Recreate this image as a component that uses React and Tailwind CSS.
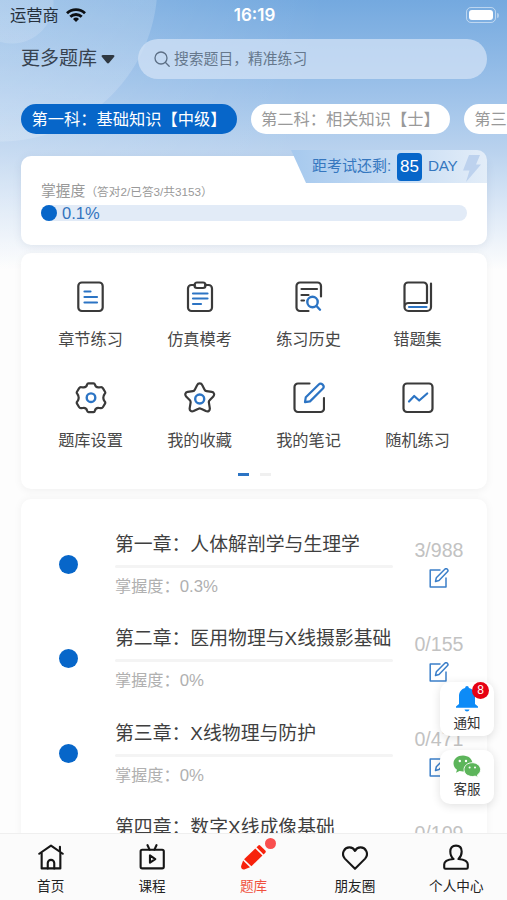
import { useState } from "react";

const subjects = ["第一科：基础知识【中级】", "第二科：相关知识【士】", "第三科：专业知识【师】"];

const chapters = [
    { title: "第一章：人体解剖学与生理学", mastery: "0.3%", count: "3/988" },
    { title: "第二章：医用物理与X线摄影基础", mastery: "0%", count: "0/155" },
    { title: "第三章：X线物理与防护", mastery: "0%", count: "0/471" },
    { title: "第四章：数字X线成像基础", mastery: "0%", count: "0/109" },
];

// Dark outline + blue accent icons, all on a 32px grid
function Icon({ children, className = "w-8 h-8" }) {
    return (
        <svg
            viewBox="0 0 32 32"
            className={className}
            fill="none"
            stroke="#3a3a3a"
            strokeWidth="2.2"
            strokeLinecap="round"
            strokeLinejoin="round"
        >
            {children}
        </svg>
    );
}

const menu = [
    {
        label: "章节练习",
        icon: (
            <>
                <rect x="3.3" y="1.5" width="24.4" height="28.5" rx="3.5" />
                <path d="M9.500 10.500h6M9.500 16h12.500M9.500 21.500h12.500" stroke="#2c74c4" />
            </>
        ),
    },
    {
        label: "仿真模考",
        icon: (
            <>
                <path d="M11 4H7.500A3.500 3.500 0 0 0 4 7.500v19A3.500 3.500 0 0 0 7.500 30h17a3.500 3.500 0 0 0 3.500-3.500v-19A3.500 3.500 0 0 0 24.500 4H21" />
                <rect x="10.500" y="1.500" width="11" height="5.500" rx="2.500" />
                <path d="M9 12.500h14.500M9 17.500h14.500M9 23h8" stroke="#2c74c4" />
            </>
        ),
    },
    {
        label: "练习历史",
        icon: (
            <>
                <path d="M15.500 30H7a3.500 3.500 0 0 1-3.500-3.500V5A3.500 3.500 0 0 1 7 1.500h17.500A3.500 3.500 0 0 1 28 5v10.500" />
                <path d="M8.500 8h15.500M8.500 14h7M8.500 19.500h2.500" />
                <g stroke="#2c74c4" strokeWidth="2.400">
                    <circle cx="19.500" cy="21" r="5.200" />
                    <path d="M23.500 25l3.500 3.700" />
                </g>
            </>
        ),
    },
    {
        label: "错题集",
        icon: (
            <>
                <path d="M2.500 26V5A3.500 3.500 0 0 1 6 1.500h15.500A3.500 3.500 0 0 1 25 5v17H6.500a4 4 0 0 0-4 4 4 4 0 0 0 4 4H25a4 4 0 0 0 4-4V2.500" />
                <path d="M7 26h17.500" stroke="#2c74c4" />
            </>
        ),
    },
    {
        label: "题库设置",
        icon: (
            <>
                <path d="M13.500 1.300H18.500Q19.600 1.300 19.900 2.600Q20.600 5.800 24 5.400L25.800 5.200Q27.200 5 28 6.400L30 9.800Q30.700 11 29.600 12Q27 15.700 29.600 19.400Q30.700 20.400 30 21.600L28 25Q27.200 26.400 25.800 26.200L24 26Q20.600 25.600 19.900 28.800Q19.600 30.100 18.500 30.100H13.500Q12.400 30.100 12.100 28.800Q11.400 25.600 8 26L6.200 26.200Q4.800 26.400 4 25L2 21.600Q1.300 20.400 2.400 19.400Q5 15.700 2.400 12Q1.300 11 2 9.800L4 6.400Q4.800 5 6.200 5.200L8 5.400Q11.400 5.800 12.100 2.600Q12.400 1.300 13.500 1.300Z" />
                <circle cx="16" cy="15.700" r="4.300" stroke="#2c74c4" strokeWidth="2.400" />
            </>
        ),
    },
    {
        label: "我的收藏",
        icon: (
            <>
                <path d="M13.200 3c1-2.300 4-2.300 5 0l2.400 4.700c.4.800 1.100 1.300 2 1.400l5.200.8c2.400.4 3 2.900 1.500 4.500l-3.700 3.900c-.6.600-.9 1.500-.7 2.300l.9 5.500c.3 2.700-1.700 4-3.900 3L17 26.700a2.700 2.700 0 0 0-2.500 0l-4.900 2.400c-2.200 1-4.300-.4-3.900-3l.9-5.500c.1-.9-.1-1.700-.7-2.300l-3.800-3.900c-1.500-1.600-.8-4.100 1.600-4.500l5.200-.8c.8-.1 1.500-.6 1.900-1.400z" />
                <circle cx="15.700" cy="17" r="4.500" stroke="#2c74c4" strokeWidth="2.400" />
            </>
        ),
    },
    {
        label: "我的笔记",
        icon: (
            <>
                <path d="M16.500 1.500H5A3.500 3.500 0 0 0 1.500 5v21.500A3.500 3.500 0 0 0 5 30h22.500a3.500 3.500 0 0 0 3.500-3.500V16" />
                <path d="M12 20.200l.8-5L25.500 2.700a2.900 2.900 0 0 1 4.200 4.100L17 19.400z" stroke="#2c74c4" />
            </>
        ),
    },
    {
        label: "随机练习",
        icon: (
            <>
                <rect x="1.500" y="1.500" width="29" height="28.500" rx="3.500" />
                <path d="M7 19.500l5.200-5.500 5 4.500 8-7" stroke="#2c74c4" />
            </>
        ),
    },
];

const tabs = [
    {
        label: "首页",
        icon: (
            <>
                <path d="M1.500 12L16 2l14.500 10M27 3.500V9M4.500 10.500V30h23V10.500" />
                <path d="M12 30v-6.500a4 4 0 0 1 8 0V30" />
            </>
        ),
    },
    {
        label: "课程",
        icon: (
            <>
                <rect x="2" y="7" width="28.500" height="23" rx="2" />
                <path d="M10.500 1.500L13 7M21.500 1.500L19 7M13.500 14v9l6.500-4.500z" />
            </>
        ),
    },
    {
        label: "题库",
        dot: true,
        icon: (
            <g fill="#f7220c" stroke="none">
                <path d="M18.800 5.500l8.800 8.800L14 27.500 5 18.700z" />
                <path d="M20.300 4l2-2a2 2 0 0 1 2.800 0l6 6a2 2 0 0 1 0 2.800l-2 2z" />
                <path d="M3.800 20.200l8.500 8.300-6.300 2.600c-3 1-5.300-1.200-4.500-4.200z" />
            </g>
        ),
    },
    {
        label: "朋友圈",
        icon: <path d="M16 30.500L3.500 18a8.700 8.700 0 0 1-1.300-9.500C5 3 13 2.500 16 8.500c3-6 11-5.500 13.800 0a8.700 8.700 0 0 1-1.300 9.500z" />,
    },
    {
        label: "个人中心",
        icon: (
            <path d="M16 2c4.800 0 7 3 7 7.200s-1.700 7.300-4 9.300c5 .5 11.500 2 11.500 6.500v4c0 1-.5 1.500-1.500 1.500H3c-1 0-1.500-.5-1.500-1.500v-4c0-4.500 6.500-6 11.500-6.500-2.300-2-4-5.100-4-9.300S11.200 2 16 2z" />
        ),
    },
];

function EditIcon() {
    return (
        <svg viewBox="0 0 20 20" className="w-5 h-5" fill="none" stroke="#3b7fc9" strokeWidth="1.500" strokeLinejoin="round">
            <path d="M11.500 2H1.200v17H17V9.500" />
            <path d="M6.500 13.500l.8-3.700L15.800 1.300a1.800 1.800 0 0 1 2.600 2.500L10 12.500z" />
        </svg>
    );
}

function StatusBar() {
    return (
        <div className="grid grid-cols-3 items-center h-[30px] pl-[10px] pr-2">
            <div className="flex items-center gap-[7px] text-[16.300px] text-[#25303c]">
                <span>运营商</span>
                <svg viewBox="0 0 20 14" className="w-5 h-3.5" fill="none" stroke="#0c0f13" strokeWidth="2.800">
                    <path d="M1 5.200a13 13 0 0 1 18 0" />
                    <path d="M4.300 8.800a8.200 8.200 0 0 1 11.400 0" />
                    <path d="M10 14l-3-3.100a4.300 4.300 0 0 1 6 0z" fill="#0c0f13" stroke="none" />
                </svg>
            </div>
            <div className="pt-px text-center text-[17px] font-semibold text-white font-[Inter,sans-serif]">16:19</div>
            <div className="flex items-center justify-end gap-px">
                <div className="w-[30px] h-4 rounded-[5px] border border-white/50 p-[2px]">
                    <div className="h-full rounded-[3px] bg-white"></div>
                </div>
                <div className="w-[2px] h-[5px] rounded-r bg-white/40"></div>
            </div>
        </div>
    );
}

export default function App() {
    const [subject, setSubject] = useState(0);
    const [activeTab, setActiveTab] = useState(2);

    return (
        <div className="h-[900px] w-full flex flex-col overflow-hidden bg-[#fdfdfd] font-['Liberation_Sans','Noto_Sans_CJK_SC',sans-serif]">
            <div className="relative flex-1 min-h-0 overflow-hidden bg-[radial-gradient(circle_at_12px_2px,rgba(255,255,255,0.14)_41px,transparent_42px),radial-gradient(circle_at_0px_-16px,rgba(255,255,255,0.17)_157px,transparent_158px),linear-gradient(100deg,rgba(255,255,255,0.2),transparent_50%),linear-gradient(to_bottom,#74a9df_0px,#9cc1e9_90px,#b9d2ee_150px,#dae7f6_205px,#fdfdfd_270px)]">
                <StatusBar />

                {/* Search */}
                <div className="flex items-center mt-[9px] pl-[21px] pr-5">
                    <button className="flex items-center gap-1 w-[117px] pt-px text-[19px] text-[#37424f] whitespace-nowrap">
                        更多题库
                        <svg viewBox="0 0 14 9" className="w-3.5 h-[9px]" fill="#2f3842">
                            <path d="M2 0h10c1.500 0 2 1 1 2L8.200 7.800c-.7.8-1.700.8-2.400 0L1 2C0 1 .5 0 2 0z" />
                        </svg>
                    </button>
                    <div className="flex-1 flex items-center gap-1 h-10 rounded-full bg-[#d2e2f5]/75 pl-4 text-[14.800px] text-[#66788d]">
                        <svg viewBox="0 0 16 16" className="w-4 h-4" fill="none" stroke="#5c6f85" strokeWidth="1.3" strokeLinecap="round">
                            <circle cx="7" cy="7" r="6" />
                            <path d="M11.500 11.500l3.700 3.700" />
                        </svg>
                        <span>搜索题目，精准练习</span>
                    </div>
                </div>

                {/* Subjects */}
                <div className="flex gap-[13.500px] mt-[25px] pl-[21px] overflow-x-auto [scrollbar-width:none]">
                    {subjects.map((s, i) => (
                        <button
                            key={s}
                            onClick={() => setSubject(i)}
                            className={`shrink-0 h-[30px] px-[10.500px] rounded-full text-[16.250px] leading-[30px] whitespace-nowrap ${
                                subject === i ? "bg-[#0766c9] text-white" : "bg-white text-[#999]"
                            }`}
                        >
                            {s}
                        </button>
                    ))}
                </div>

                <main className="pl-[21px] pr-5">
                    {/* Mastery */}
                    <section className="relative mt-[22px] h-[89px] rounded-[10px] bg-white pt-[23px] px-5 shadow-[0_2px_8px_rgba(60,80,120,0.10)]">
                        <div className="absolute right-0 -top-[6px] flex items-center w-[196px] h-[33px] pl-[21px] rounded-tr-[10px] bg-linear-to-r from-[#a6c9ee] to-[#e3edf8] [clip-path:polygon(0_0,100%_0,100%_100%,15px_100%)] text-[15px] text-[#3577bf] whitespace-nowrap">
                            <span className="w-[79px]">距考试还剩:</span>
                            <span className="ml-[6px] w-[25px] h-7 rounded-[4px] bg-[#0766c9] text-center text-[17px] leading-7 text-white">85</span>
                            <span className="ml-[6px] text-[15.300px] tracking-[-0.3px]">DAY</span>
                            <svg viewBox="0 0 18 27" className="ml-[6px] mt-1 w-[18px] h-[27px] shrink-0" fill="#bdd2ee">
                                <path d="M6 0h11l-4 9.500h5L3 27l3.500-11.500H0z" />
                            </svg>
                        </div>
                        <div className="flex items-center h-6 text-[14.800px] text-[#999]">
                            掌握度<span className="text-[11.700px] pt-px">（答对2/已答3/共3153）</span>
                        </div>
                        <div className="mt-[2px] flex items-center h-4 rounded-full bg-[#e2ebf7]">
                            <div className="w-4 h-4 rounded-full bg-[#0766c9]"></div>
                            <span className="ml-[5px] text-[16.500px] text-[#3173bd]">0.1%</span>
                        </div>
                    </section>

                    {/* Menu */}
                    <section className="mt-2 h-[236px] rounded-[10px] bg-white pt-7 px-[15px] shadow-[0_2px_8px_rgba(0,0,0,0.05)]">
                        <div className="grid grid-cols-4 gap-y-[17px]">
                            {menu.map((m) => (
                                <button key={m.label} className="flex flex-col items-center h-[84px]">
                                    <Icon>{m.icon}</Icon>
                                    <span className="mt-[14px] text-[16.200px] leading-6 text-[#484848]">{m.label}</span>
                                </button>
                            ))}
                        </div>
                        <div className="flex justify-center gap-[11px] mt-[7px]">
                            <div className="w-[11px] h-[3px] bg-[#2c74c4]"></div>
                            <div className="w-[11px] h-[3px] bg-[#f0f0f0]"></div>
                        </div>
                    </section>

                    {/* Chapters */}
                    <section className="mt-[10px] h-[400px] rounded-[10px] bg-white pt-[32px] shadow-[0_0_8px_rgba(0,0,0,0.05)]">
                        {chapters.map((c) => (
                            <div key={c.title} className="flex h-[94.300px]">
                                <div className="w-[94px] pl-[38px] pt-[24px] shrink-0">
                                    <div className="w-[19px] h-[19px] rounded-full bg-[#0766c9]"></div>
                                </div>
                                <div className="w-[278px] shrink-0 whitespace-nowrap">
                                    <h3 className="text-[18.850px] leading-7 text-[#3f3f3f]">{c.title}</h3>
                                    <div className="mt-[6px] h-[3px] rounded bg-[#f4f4f4]"></div>
                                    <p className="mt-[6px] text-[16.200px] leading-6 text-[#b0b0b0]">
                                        掌握度：<span className="text-[16.800px]">{c.mastery}</span>
                                    </p>
                                </div>
                                <div className="flex-1 flex flex-col items-center pt-[5px] pr-[2px]">
                                    <span className="text-[19.600px] leading-7 text-[#c2c2c2]">{c.count}</span>
                                    <div className="mt-[4px]">
                                        <EditIcon />
                                    </div>
                                </div>
                            </div>
                        ))}
                    </section>
                </main>

                {/* Floating buttons */}
                <div className="absolute right-[13px] top-[682px] flex flex-col gap-[14px] text-[13.500px] text-[#333]">
                    <button className="relative flex flex-col items-center w-[54px] h-[54px] rounded-[10px] bg-white pt-[4px] shadow-[0_2px_10px_rgba(0,0,0,0.12)]">
                        <svg viewBox="0 0 24 26" className="w-6 h-[26px]" fill="#0d8bf7">
                            <path d="M12 0c1 0 1.800.8 1.900 2 3.800 1 6.100 4 6.100 8v8l3 2.500v1.300H1v-1.300L4 18v-8c0-4 2.300-7 6.100-8 .1-1.200.9-2 1.900-2z" />
                            <path d="M9.500 23.500h5c-.4 1.300-1.300 2-2.500 2s-2.100-.7-2.500-2z" />
                        </svg>
                        <span className="leading-5 mt-[2px]">通知</span>
                        <span className="absolute top-0 left-8 w-[17px] h-[17px] rounded-full bg-[#e60012] text-center text-[12px] leading-[17px] text-white">8</span>
                    </button>
                    <button className="flex flex-col items-center w-[54px] h-[54px] rounded-[10px] bg-white pt-[5px] shadow-[0_2px_10px_rgba(0,0,0,0.12)]">
                        <svg viewBox="0 0 28 23" className="w-7 h-[23px]" fill="#5db55b">
                            <path d="M10 .5C4.500.5.5 4 .5 8.500c0 2.600 1.300 4.700 3.500 6.200l-1 3 3.500-1.800c1.200.3 2.300.5 3.500.5 5.300 0 9.500-3.500 9.500-7.900S15.300.5 10 .5z" />
                            <path
                                d="M19.300 7.700c-4.700 0-8.300 3.100-8.300 6.900s3.600 6.900 8.300 6.900c1 0 2-.2 2.900-.4l2.900 1.500-.8-2.500c1.900-1.300 3.300-3.200 3.300-5.500 0-3.800-3.700-6.900-8.300-6.900z"
                                stroke="#fff"
                                strokeWidth=".9"
                            />
                            <g fill="#fff">
                                <circle cx="6.800" cy="6" r="1.200" />
                                <circle cx="13" cy="6" r="1.200" />
                                <circle cx="16.600" cy="12.500" r="1" />
                                <circle cx="22" cy="12.500" r="1" />
                            </g>
                        </svg>
                        <span className="leading-5 mt-[2px]">客服</span>
                    </button>
                </div>
            </div>

            {/* Tab bar */}
            <nav className="grid grid-cols-5 h-[67px] shrink-0 border-t border-[#efefef] bg-[#fbfbfb]">
                {tabs.map((t, i) => (
                    <button
                        key={t.label}
                        onClick={() => setActiveTab(i)}
                        className={`flex flex-col items-center pt-[10px] text-[13.600px] ${activeTab === i ? "text-[#f0513f]" : "text-[#222]"}`}
                    >
                        <span className="relative">
                            <svg
                                viewBox="0 0 32 32"
                                className="w-[26px] h-[26px]"
                                fill="none"
                                stroke="#161616"
                                strokeWidth="2.600"
                                strokeLinecap="round"
                                strokeLinejoin="round"
                            >
                                {t.icon}
                            </svg>
                            {t.dot && <span className="absolute -right-[10px] -top-[6px] w-[11px] h-[11px] rounded-full bg-[#f94f4f]"></span>}
                        </span>
                        <span className="mt-[7px] leading-5">{t.label}</span>
                    </button>
                ))}
            </nav>
        </div>
    );
}
